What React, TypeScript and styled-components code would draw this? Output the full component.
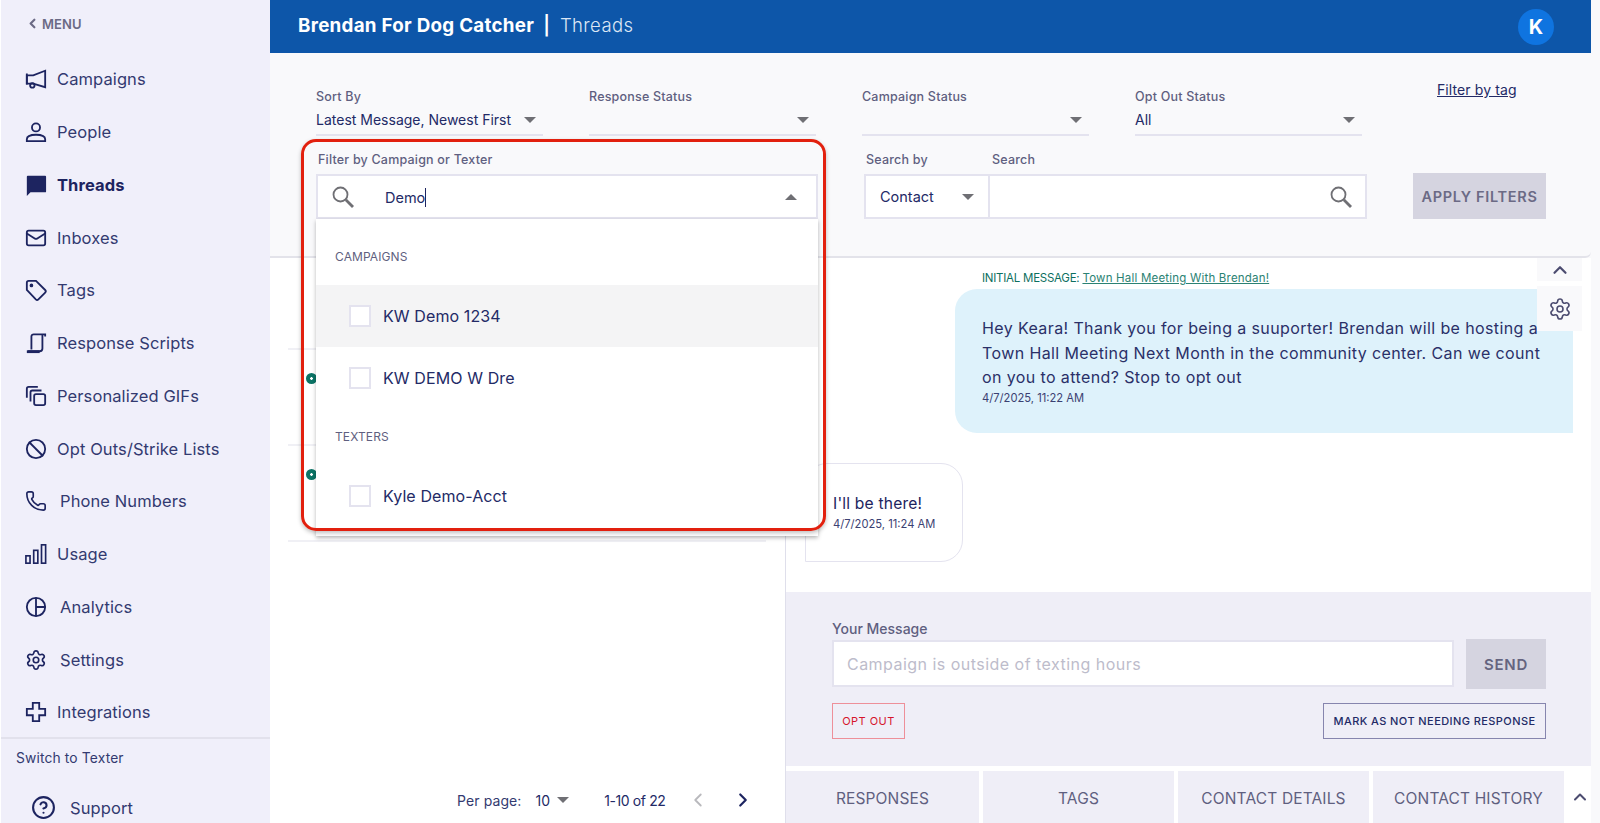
import React from "react";
import styled, { createGlobalStyle } from "styled-components";
import { Phone, Settings, Mail, CircleHelp, Ban, ChevronLeft, ChevronRight, ChevronUp } from "lucide-react";

const FONT = `Inter, "Open Sans", "Liberation Sans", sans-serif`;
const INK = "#232a66";
const MUTED = "#5f5f80";
const LINE = "#dfdfeb";

const Global = createGlobalStyle`
  html, body { margin: 0; padding: 0; height: 100%; overflow: hidden; background: #f9f9fb; }
  body { font-family: ${FONT}; color: ${INK}; }
  * { box-sizing: border-box; }
`;

const Shell = styled.div`
  display: flex;
  width: 1600px;
  height: 823px;
  overflow: hidden;
  background: #f9f9fb;
`;

/* Sidebar */
const Sidebar = styled.nav`
  width: 270px;
  flex: none;
  height: 100%;
  display: flex;
  flex-direction: column;
  background: #f0effa;
  border-left: 1px solid #fff;
`;
const MenuBack = styled.div`
  height: 53px;
  flex: none;
  display: flex;
  align-items: center;
  gap: 2px;
  padding: 0 0 6px 24px;
  font-size: 13px;
  font-weight: 600;
  letter-spacing: 0.1px;
  color: #6b6a85;
`;
const NavList = styled.div`
  flex: none;
  height: 686px;
  display: grid;
  grid-auto-rows: 52.75px;
  border-bottom: 2px solid #e2e1ec;
`;
const NavItem = styled.a<{ $active?: boolean; $gap?: number }>`
  display: flex;
  align-items: center;
  padding-left: 24px;
  gap: ${(p) => p.$gap ?? 10}px;
  font-size: 16.5px;
  letter-spacing: 0.1px;
  font-weight: ${(p) => (p.$active ? 700 : 400)};
  color: ${(p) => (p.$active ? "#1d2460" : "#333a70")};
`;
const NavIcon = styled.span`
  width: 22px;
  height: 22px;
  flex: none;
  display: block;
  color: #1d2460;
  svg { display: block; width: 22px; height: 22px; }
`;
const SwitchLink = styled.div`
  height: 37px;
  flex: none;
  display: flex;
  align-items: center;
  padding-left: 15px;
  font-size: 13.8px;
  letter-spacing: 0.15px;
  color: #333a70;
`;
const SupportLink = styled.div`
  display: flex;
  align-items: center;
  gap: 14px;
  padding: 19px 0 0 30px;
  font-size: 16.5px;
  letter-spacing: 0.1px;
  color: #333a70;
  svg { color: #1d2460; }
`;

/* Main */
const Main = styled.div`
  width: 1321px;
  flex: none;
  height: 100%;
  display: flex;
  flex-direction: column;
`;
const Header = styled.header`
  height: 53px;
  flex: none;
  display: flex;
  align-items: center;
  padding: 0 37px 3px 28px;
  background: #0d56a9;
  color: #fff;
  font-size: 18.8px;
`;
const OrgName = styled.strong`
  font-weight: 700;
  letter-spacing: 0.27px;
`;
const CrumbBar = styled.span`
  margin-left: 9px;
  font-weight: 600;
  color: #fff;
`;
const Crumb = styled.span`
  margin-left: 10px;
  font-size: 18.5px;
  font-weight: 300;
  color: #dbe6f5;
  letter-spacing: 0.4px;
`;
const Avatar = styled.div`
  margin-left: auto;
  margin-top: 3px;
  width: 36px;
  height: 36px;
  border-radius: 50%;
  background: #0f74e0;
  display: flex;
  align-items: center;
  justify-content: center;
  font-size: 20px;
  font-weight: 700;
`;

/* Filters */
const Filters = styled.section`
  height: 205px;
  flex: none;
  padding: 36px 0 0 46px;
  background: #f9f9fb;
  border-bottom: 2px solid #e3e3ea;
  border-bottom-right-radius: 6px;
  position: relative;
  z-index: 2;
`;
const SelectRow = styled.div`
  display: grid;
  grid-template-columns: repeat(4, 227px) auto;
  column-gap: 46px;
`;
const FieldLabel = styled.div`
  font-size: 12.5px;
  line-height: 16px;
  font-weight: 500;
  letter-spacing: 0.2px;
  color: ${MUTED};
`;
const SelectBox = styled.div`
  height: 28px;
  margin-top: 3px;
  padding-bottom: 3px;
  display: flex;
  align-items: center;
  justify-content: space-between;
  border-bottom: 2px solid #e4e3ef;
  font-size: 14px;
  color: ${INK};
  white-space: nowrap;
`;
const Caret = styled.span<{ $up?: boolean }>`
  flex: none;
  width: 0;
  height: 0;
  margin-right: 7px;
  border-left: 6px solid transparent;
  border-right: 6px solid transparent;
  ${(p) => (p.$up ? "border-bottom: 6px solid #6f6f74;" : "border-top: 6px solid #6f6f74;")}
`;
const TagLink = styled.a`
  margin: -7px 0 0 29px;
  height: 16px;
  font-size: 14px;
  line-height: 16px;
  letter-spacing: 0.1px;
  text-decoration: underline;
  color: ${INK};
  white-space: nowrap;
`;
const SearchRow = styled.div`
  display: flex;
  gap: 46px;
  margin-top: 16px;
`;
const ComboField = styled.div`
  position: relative;
  width: 502px;
`;
const ComboLabel = styled(FieldLabel)`
  padding-left: 2px;
  height: 22px;
`;
const ComboInput = styled.div`
  height: 45px;
  display: flex;
  align-items: center;
  padding-left: 13px;
  padding-right: 12px;
  background: #fff;
  border: 2px solid #e4e3ef;
  font-size: 14.5px;
  color: ${INK};
`;
const ComboText = styled.span`
  margin-left: 30px;
`;
const TextCursor = styled.span`
  display: inline-block;
  width: 1px;
  height: 19px;
  margin-bottom: -4px;
  background: #1d2460;
`;
const ComboCaret = styled(Caret)`
  margin-left: auto;
`;
const DropPanel = styled.div`
  position: absolute;
  top: 67px;
  left: 0;
  right: 0;
  height: 317px;
  padding-top: 10px;
  overflow: hidden;
  background: #fff;
  box-shadow: 0 2px 4px rgba(0, 0, 0, 0.28);
`;
const GroupLabel = styled.div`
  padding: 20px 19px;
  font-size: 12px;
  line-height: 16px;
  letter-spacing: 0.1px;
  color: ${MUTED};
`;
const OptionRow = styled.div<{ $hover?: boolean }>`
  height: 62px;
  display: flex;
  align-items: center;
  gap: 12px;
  padding-left: 33px;
  font-size: 16px;
  letter-spacing: 0.1px;
  color: ${INK};
  background: ${(p) => (p.$hover ? "#f4f4f5" : "#fff")};
`;
const CheckBox = styled.span`
  width: 22px;
  height: 22px;
  flex: none;
  background: #fff;
  border: 2px solid #e4e3ef;
`;
const RedFrame = styled.div`
  position: absolute;
  left: -15px;
  top: -13px;
  width: 525px;
  height: 392px;
  border: 3px solid #e2200e;
  border-radius: 15px;
  box-shadow: 0 2px 4px rgba(0, 0, 0, 0.25);
  pointer-events: none;
`;
const SearchGroup = styled.div`
  width: 503px;
  display: grid;
  grid-template-columns: 126px 1fr;
`;
const SearchHead = styled(FieldLabel)<{ $indent: number }>`
  height: 22px;
  padding-left: ${(p) => p.$indent}px;
`;
const ContactSelect = styled.div`
  height: 45px;
  display: flex;
  align-items: center;
  justify-content: space-between;
  padding: 0 7px 0 14px;
  background: #fff;
  border: 2px solid #e4e3ef;
  font-size: 14.5px;
  color: ${INK};
`;
const SearchInput = styled.div`
  height: 45px;
  display: flex;
  align-items: center;
  justify-content: flex-end;
  padding-right: 12px;
  background: #fff;
  border: 2px solid #e4e3ef;
  border-left: none;
`;
const ApplyButton = styled.button`
  align-self: flex-end;
  width: 133px;
  height: 46px;
  padding: 0;
  border: none;
  background: #d5d4e0;
  color: #6b6a85;
  font-family: ${FONT};
  font-size: 14.5px;
  font-weight: 600;
  letter-spacing: 0.7px;
  white-space: nowrap;
`;

/* Body */
const Body = styled.div`
  flex: 1;
  min-height: 0;
  display: flex;
  background: #fff;
`;
const ListPane = styled.div`
  width: 515px;
  flex: none;
  display: flex;
  flex-direction: column;
  padding: 0 19px 0 18px;
`;
const ThreadRow = styled.div<{ $first?: boolean }>`
  height: ${(p) => (p.$first ? 92 : 96)}px;
  flex: none;
  padding: 23px 0 0 18px;
  border-bottom: 2px solid #f0f0f5;
`;
const UnreadDot = styled.span`
  display: block;
  width: 11px;
  height: 11px;
  border-radius: 50%;
  background: radial-gradient(circle, #fff 0 1px, #0b7466 1.6px);
`;
const Pager = styled.div`
  margin-top: auto;
  height: 46px;
  display: flex;
  align-items: center;
  padding-left: 169px;
  font-size: 14px;
  letter-spacing: 0.1px;
  color: ${INK};
  white-space: nowrap;
`;
const PagerLabel = styled.span`
  color: #333a70;
`;
const PerPage = styled.span`
  margin-left: 14px;
  margin-right: 7px;
`;
const PagerCount = styled.span`
  margin-left: 28px;
  margin-right: 22px;
  letter-spacing: -0.4px;
`;
const PagerPrev = styled(ChevronLeft)`
  flex: none;
  color: #b9b9bd;
  margin-right: 23px;
`;
const PagerNext = styled(ChevronRight)`
  flex: none;
  color: #1d2460;
`;

const ThreadPane = styled.div`
  flex: 1;
  min-width: 0;
  display: flex;
  flex-direction: column;
  border-left: 1px solid ${LINE};
`;
const Messages = styled.div`
  position: relative;
  height: 334px;
  flex: none;
  display: flex;
  flex-direction: column;
  padding: 12px 18px 0 19px;
  overflow: hidden;
`;
const InitialLine = styled.div`
  align-self: flex-end;
  width: 591px;
  height: 19px;
  line-height: 16px;
  font-size: 11.5px;
  letter-spacing: -0.25px;
  color: #0d6f60;
  white-space: nowrap;
  a { text-decoration: underline; color: #2b8273; letter-spacing: 0.2px; }
`;
const OutBubble = styled.div`
  align-self: flex-end;
  width: 618px;
  height: 144px;
  padding: 27px 0 0 27px;
  background: #def2fb;
  border-radius: 22px 0 0 22px;
  font-size: 16px;
  line-height: 24.5px;
  letter-spacing: 0.39px;
  color: #2a3068;
  white-space: nowrap;
`;
const Stamp = styled.div`
  font-size: 11.2px;
  line-height: 17px;
  letter-spacing: 0;
  color: #3b4172;
`;
const InBubble = styled.div`
  width: 158px;
  height: 99px;
  margin-top: 30px;
  padding: 28px 0 0 27px;
  border: 1.5px solid #e4e3ef;
  border-radius: 22px 22px 22px 0;
  font-size: 15.6px;
  line-height: 24px;
  letter-spacing: 0.2px;
  color: #1d2460;
`;
const FloatStack = styled.div`
  position: absolute;
  top: 0;
  right: 9px;
  width: 45px;
  display: flex;
  flex-direction: column;
  gap: 5px;
`;
const FloatButton = styled.div<{ $h: number }>`
  height: ${(p) => p.$h}px;
  display: flex;
  align-items: center;
  justify-content: center;
  background: #f9f9fb;
  color: #4c4c70;
`;
const Composer = styled.div`
  height: 174px;
  flex: none;
  padding: 29px 45px 0 46px;
  background: #efeef7;
`;
const ComposerLabel = styled.div`
  height: 19px;
  font-size: 14px;
  line-height: 16px;
  font-weight: 500;
  color: ${MUTED};
`;
const ComposerRow = styled.div`
  display: flex;
  gap: 12px;
`;
const MessageInput = styled.div`
  flex: 1;
  height: 47px;
  display: flex;
  align-items: center;
  padding-left: 13px;
  background: #fff;
  border: 2px solid #e4e3ef;
  font-size: 16px;
  letter-spacing: 0.47px;
  color: #bdbccb;
`;
const SendButton = styled.button`
  width: 80px;
  height: 50px;
  margin-top: -1px;
  border: none;
  background: #d5d4e0;
  color: #65647f;
  font-family: ${FONT};
  font-size: 15px;
  font-weight: 600;
  letter-spacing: 0.7px;
`;
const ActionRow = styled.div`
  display: flex;
  justify-content: space-between;
  margin-top: 14px;
`;
const OptOutButton = styled.button`
  width: 73px;
  height: 36px;
  padding: 0 0 1px;
  background: transparent;
  border: 1px solid #ee8f99;
  color: #d6142c;
  font-family: ${FONT};
  font-size: 11px;
  letter-spacing: 0.45px;
`;
const MarkButton = styled.button`
  width: 223px;
  height: 36px;
  padding: 0 0 1px;
  background: transparent;
  border: 1.5px solid #8685ae;
  color: ${INK};
  font-family: ${FONT};
  font-size: 11px;
  font-weight: 500;
  letter-spacing: 0.42px;
  white-space: nowrap;
`;
const Tabs = styled.div`
  height: 52px;
  flex: none;
  margin-top: 5px;
  display: flex;
  gap: 4px;
`;
const Tab = styled.div<{ $w: number }>`
  width: ${(p) => p.$w}px;
  display: flex;
  align-items: center;
  justify-content: center;
  padding-top: 2px;
  background: #efeef7;
  font-size: 15.5px;
  letter-spacing: 0.15px;
  color: #5f5f80;
`;
const TabToggle = styled.div`
  flex: 1;
  display: flex;
  align-items: center;
  justify-content: center;
  color: #4c4c70;
`;

const S = { width: 22, height: 22, viewBox: "0 0 24 24", fill: "none", stroke: "currentColor", strokeWidth: 2 } as const;

const MegaphoneIcon = () => (
  <svg {...S}>
    <path d="M2 8h7l13-5v18l-13-4H2z" />
    <circle cx="8" cy="19" r="2.4" />
    <path d="M2 6v12" />
  </svg>
);
const PersonIcon = () => (
  <svg {...S}>
    <circle cx="12" cy="7" r="4.4" />
    <path d="M2 22v-2c0-3 4-5 10-5s10 2 10 5v2z" />
  </svg>
);
const ThreadIcon = () => (
  <svg width="22" height="22" viewBox="0 0 24 24" fill="currentColor">
    <path d="M2 3a1 1 0 0 1 1-1h19a1 1 0 0 1 1 1v16a1 1 0 0 1-1 1H6l-4 4z" />
  </svg>
);
const TagIcon = () => (
  <svg {...S}>
    <path d="M2 4a2 2 0 0 1 2-2h8l10 10a2 2 0 0 1 0 2.8l-7.4 7.4a2 2 0 0 1-2.8 0L2 12z" />
    <circle cx="7" cy="7" r="1" fill="currentColor" />
  </svg>
);
const ScriptIcon = () => (
  <svg {...S}>
    <path d="M7 19V5a2.5 2.5 0 0 1 2.5-2.5H22V5" />
    <path d="M19 3v15a3 3 0 0 1-3 3H3" />
    <path d="M2 21.5h14" strokeWidth="3" />
  </svg>
);
const CopiesIcon = () => (
  <svg {...S}>
    <rect x="10" y="10" width="12" height="12" rx="2" />
    <path d="M6 18V8a2 2 0 0 1 2-2h10M2 14V4a2 2 0 0 1 2-2h10" />
  </svg>
);
const UsageIcon = () => (
  <svg {...S} strokeWidth="1.8">
    <rect x="1" y="14" width="4.5" height="8" />
    <rect x="9.5" y="8" width="4.5" height="14" />
    <rect x="18" y="2" width="4.5" height="20" />
  </svg>
);
const PieIcon = () => (
  <svg {...S}>
    <circle cx="12" cy="12" r="10" />
    <path d="M12 2v20M12 12h10" />
  </svg>
);
const PlusIcon = () => (
  <svg {...S}>
    <path d="M8.5 2h7v6.5H22v7h-6.5V22h-7v-6.5H2v-7h6.5z" />
  </svg>
);
const LensIcon = () => (
  <svg width="24" height="24" viewBox="0 0 24 24" fill="none" stroke="#6f6f74" style={{ flex: "none" }}>
    <circle cx="9.5" cy="9.5" r="7" strokeWidth="1.8" />
    <path d="M14.8 14.8 22 22" strokeWidth="2.8" />
  </svg>
);

const navItems: { label: string; icon: React.ReactNode; gap?: number; active?: boolean }[] = [
  { label: "Campaigns", icon: <MegaphoneIcon /> },
  { label: "People", icon: <PersonIcon /> },
  { label: "Threads", icon: <ThreadIcon />, active: true },
  { label: "Inboxes", icon: <Mail strokeWidth={2} /> },
  { label: "Tags", icon: <TagIcon /> },
  { label: "Response Scripts", icon: <ScriptIcon /> },
  { label: "Personalized GIFs", icon: <CopiesIcon /> },
  { label: "Opt Outs/Strike Lists", icon: <Ban strokeWidth={2} /> },
  { label: "Phone Numbers", icon: <Phone strokeWidth={1.8} />, gap: 13 },
  { label: "Usage", icon: <UsageIcon /> },
  { label: "Analytics", icon: <PieIcon />, gap: 13 },
  { label: "Settings", icon: <Settings strokeWidth={1.8} />, gap: 13 },
  { label: "Integrations", icon: <PlusIcon /> },
];

export default function App() {
  return (
    <Shell>
      <Global />
      <Sidebar>
        <MenuBack>
          <ChevronLeft size={15} strokeWidth={3.5} />
          MENU
        </MenuBack>
        <NavList>
          {navItems.map((n) => (
            <NavItem key={n.label} $active={n.active} $gap={n.gap}>
              <NavIcon>{n.icon}</NavIcon>
              {n.label}
            </NavItem>
          ))}
        </NavList>
        <SwitchLink>Switch to Texter</SwitchLink>
        <SupportLink>
          <CircleHelp size={25} strokeWidth={2} />
          Support
        </SupportLink>
      </Sidebar>

      <Main>
        <Header>
          <OrgName>Brendan For Dog Catcher</OrgName>
          <CrumbBar>|</CrumbBar>
          <Crumb>Threads</Crumb>
          <Avatar>K</Avatar>
        </Header>

        <Filters>
          <SelectRow>
            <div>
              <FieldLabel>Sort By</FieldLabel>
              <SelectBox>
                Latest Message, Newest First
                <Caret />
              </SelectBox>
            </div>
            <div>
              <FieldLabel>Response Status</FieldLabel>
              <SelectBox>
                <span />
                <Caret />
              </SelectBox>
            </div>
            <div>
              <FieldLabel>Campaign Status</FieldLabel>
              <SelectBox>
                <span />
                <Caret />
              </SelectBox>
            </div>
            <div>
              <FieldLabel>Opt Out Status</FieldLabel>
              <SelectBox>
                All
                <Caret />
              </SelectBox>
            </div>
            <TagLink>Filter by tag</TagLink>
          </SelectRow>

          <SearchRow>
            <ComboField>
              <ComboLabel>Filter by Campaign or Texter</ComboLabel>
              <ComboInput>
                <LensIcon />
                <ComboText>
                  Demo
                  <TextCursor />
                </ComboText>
                <ComboCaret $up />
              </ComboInput>
              <DropPanel>
                <GroupLabel>CAMPAIGNS</GroupLabel>
                <OptionRow $hover>
                  <CheckBox />
                  KW Demo 1234
                </OptionRow>
                <OptionRow>
                  <CheckBox />
                  KW DEMO W Dre
                </OptionRow>
                <GroupLabel>TEXTERS</GroupLabel>
                <OptionRow>
                  <CheckBox />
                  Kyle Demo-Acct
                </OptionRow>
              </DropPanel>
              <RedFrame />
            </ComboField>

            <SearchGroup>
              <SearchHead $indent={2}>Search by</SearchHead>
              <SearchHead $indent={2}>Search</SearchHead>
              <ContactSelect>
                Contact
                <Caret />
              </ContactSelect>
              <SearchInput>
                <LensIcon />
              </SearchInput>
            </SearchGroup>

            <ApplyButton>APPLY FILTERS</ApplyButton>
          </SearchRow>
        </Filters>

        <Body>
          <ListPane>
            <ThreadRow $first />
            <ThreadRow>
              <UnreadDot />
            </ThreadRow>
            <ThreadRow>
              <UnreadDot />
            </ThreadRow>
            <Pager>
              <PagerLabel>Per page:</PagerLabel>
              <PerPage>10</PerPage>
              <Caret />
              <PagerCount>1-10 of 22</PagerCount>
              <PagerPrev size={22} strokeWidth={2} />
              <PagerNext size={22} strokeWidth={2.4} />
            </Pager>
          </ListPane>

          <ThreadPane>
            <Messages>
              <InitialLine>
                INITIAL MESSAGE: <a>Town Hall Meeting With Brendan!</a>
              </InitialLine>
              <OutBubble>
                Hey Keara! Thank you for being a suuporter! Brendan will be hosting a
                <br />
                Town Hall Meeting Next Month in the community center. Can we count
                <br />
                on you to attend? Stop to opt out
                <Stamp>4/7/2025, 11:22 AM</Stamp>
              </OutBubble>
              <InBubble>
                I'll be there!
                <Stamp>4/7/2025, 11:24 AM</Stamp>
              </InBubble>
              <FloatStack>
                <FloatButton $h={23}>
                  <ChevronUp size={22} strokeWidth={2.4} />
                </FloatButton>
                <FloatButton $h={45}>
                  <Settings size={24} strokeWidth={1.6} />
                </FloatButton>
              </FloatStack>
            </Messages>

            <Composer>
              <ComposerLabel>Your Message</ComposerLabel>
              <ComposerRow>
                <MessageInput>Campaign is outside of texting hours</MessageInput>
                <SendButton>SEND</SendButton>
              </ComposerRow>
              <ActionRow>
                <OptOutButton>OPT OUT</OptOutButton>
                <MarkButton>MARK AS NOT NEEDING RESPONSE</MarkButton>
              </ActionRow>
            </Composer>

            <Tabs>
              <Tab $w={193}>RESPONSES</Tab>
              <Tab $w={191}>TAGS</Tab>
              <Tab $w={191}>CONTACT DETAILS</Tab>
              <Tab $w={191}>CONTACT HISTORY</Tab>
              <TabToggle>
                <ChevronUp size={20} strokeWidth={2.4} />
              </TabToggle>
            </Tabs>
          </ThreadPane>
        </Body>
      </Main>
    </Shell>
  );
}
